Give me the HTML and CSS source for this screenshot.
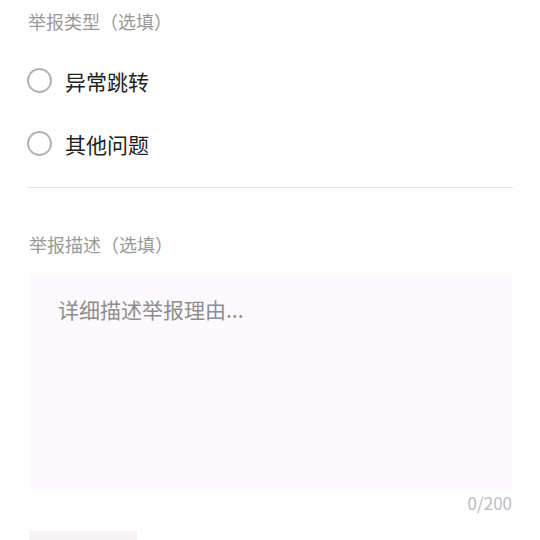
FILE: index.html
```html
<!DOCTYPE html>
<html lang="zh-CN">
<head>
    <meta charset="UTF-8">
    <meta name="viewport" content="width=device-width, initial-scale=1.0">
    <title>举报</title>
    <link rel="stylesheet" href="styles.css">
</head>
<body>
    <div class="page">
        <!-- 举报类型 -->
        <div class="section-title">举报类型（选填）</div>
        <ul class="radio-list">
            <li class="radio-item"><span class="radio"></span><span class="radio-text">异常跳转</span></li>
            <li class="radio-item"><span class="radio"></span><span class="radio-text">其他问题</span></li>
        </ul>
        <div class="divider"></div>
        <!-- 举报描述 -->
        <div class="section-title desc-title">举报描述（选填）</div>
        <div class="textarea-box">
            <textarea class="textarea" placeholder="详细描述举报理由..."></textarea>
        </div>
        <div class="counter">0/200</div>
        <div class="upload"></div>
    </div>
</body>
</html>
```

FILE: styles.css
```css
body{
    margin: 0;
    padding: 0;
    background: #fff;
    font-family: "Noto Sans CJK SC", "Noto Sans", sans-serif;
}
.page{
    padding: 9px 27px 0 28px;
}
.section-title{
    font-size: 18px;
    line-height: 24px;
    color: #999;
}
.radio-list{
    list-style: none;
    margin: 16px 0 0;
    padding: 0;
}
.radio-item{
    display: flex;
    align-items: center;
    height: 63px;
}
.radio{
    box-sizing: border-box;
    width: 25px;
    height: 25px;
    border: 2px solid #b3b3b3;
    border-radius: 50%;
    margin-left: -1px;
}
.radio-text{
    margin-left: 13px;
    font-size: 21px;
    color: #222;
}
.divider{
    height: 1px;
    background: #e6e6e6;
    margin: 12px 0 0 -1px;
}
.desc-title{
    margin-top: 44px;
    margin-left: 1px;
}
.textarea-box{
    margin: 17px 1px 0 1px;
    height: 216px;
    background: #fdf9fd;
}
.textarea{
    box-sizing: border-box;
    width: 100%;
    height: 100%;
    border: none;
    outline: none;
    resize: none;
    background: transparent;
    padding: 21px 29px;
    font-family: inherit;
    font-size: 21px;
    line-height: 30px;
    color: #333;
}
.textarea::placeholder{
    color: #8e8e8e;
}
.counter{
    margin-top: 2px;
    margin-right: 1px;
    text-align: right;
    font-size: 17px;
    line-height: 24px;
    color: #bbb;
}
.upload{
    margin: 16px 0 0 1px;
    width: 108px;
    height: 40px;
    background: #f7f3f5;
}
```
